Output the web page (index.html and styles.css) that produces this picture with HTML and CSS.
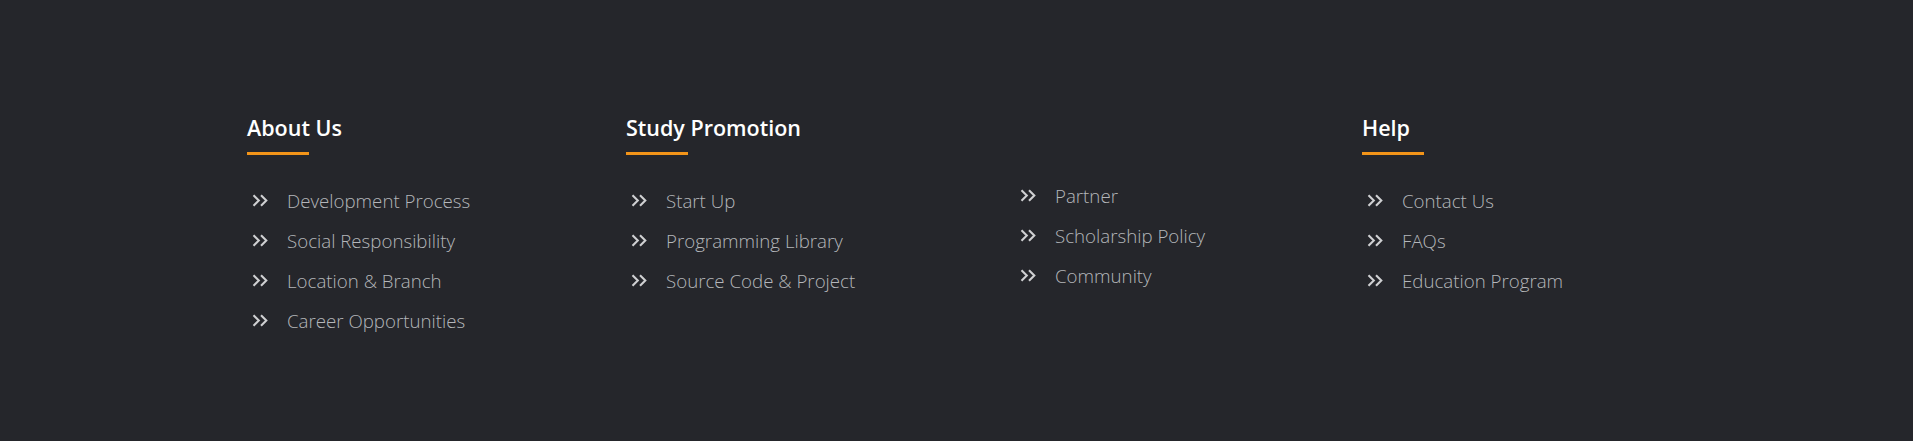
FILE: index.html
```html
<!DOCTYPE html>
<html lang="en">
<head>
<meta charset="utf-8">
<title>Footer</title>
<link rel="stylesheet" href="styles.css">
</head>
<body>
<footer class="footer">
  <div class="footer-grid">
    <div class="col">
      <h3 class="col-title">About Us</h3>
      <ul class="links">
        <li><svg class="chev" viewBox="0 0 17 13"><path d="M1.5 1.2 L6.8 6.5 L1.5 11.8 M9 1.2 L14.3 6.5 L9 11.8"/></svg><a href="#">Development Process</a></li>
        <li><svg class="chev" viewBox="0 0 17 13"><path d="M1.5 1.2 L6.8 6.5 L1.5 11.8 M9 1.2 L14.3 6.5 L9 11.8"/></svg><a href="#">Social Responsibility</a></li>
        <li><svg class="chev" viewBox="0 0 17 13"><path d="M1.5 1.2 L6.8 6.5 L1.5 11.8 M9 1.2 L14.3 6.5 L9 11.8"/></svg><a href="#">Location &amp; Branch</a></li>
        <li><svg class="chev" viewBox="0 0 17 13"><path d="M1.5 1.2 L6.8 6.5 L1.5 11.8 M9 1.2 L14.3 6.5 L9 11.8"/></svg><a href="#">Career Opportunities</a></li>
      </ul>
    </div>
    <div class="col">
      <h3 class="col-title">Study Promotion</h3>
      <ul class="links">
        <li><svg class="chev" viewBox="0 0 17 13"><path d="M1.5 1.2 L6.8 6.5 L1.5 11.8 M9 1.2 L14.3 6.5 L9 11.8"/></svg><a href="#">Start Up</a></li>
        <li><svg class="chev" viewBox="0 0 17 13"><path d="M1.5 1.2 L6.8 6.5 L1.5 11.8 M9 1.2 L14.3 6.5 L9 11.8"/></svg><a href="#">Programming Library</a></li>
        <li><svg class="chev" viewBox="0 0 17 13"><path d="M1.5 1.2 L6.8 6.5 L1.5 11.8 M9 1.2 L14.3 6.5 L9 11.8"/></svg><a href="#">Source Code &amp; Project</a></li>
      </ul>
    </div>
    <div class="col col-plain">
      <ul class="links">
        <li><svg class="chev" viewBox="0 0 17 13"><path d="M1.5 1.2 L6.8 6.5 L1.5 11.8 M9 1.2 L14.3 6.5 L9 11.8"/></svg><a href="#">Partner</a></li>
        <li><svg class="chev" viewBox="0 0 17 13"><path d="M1.5 1.2 L6.8 6.5 L1.5 11.8 M9 1.2 L14.3 6.5 L9 11.8"/></svg><a href="#">Scholarship Policy</a></li>
        <li><svg class="chev" viewBox="0 0 17 13"><path d="M1.5 1.2 L6.8 6.5 L1.5 11.8 M9 1.2 L14.3 6.5 L9 11.8"/></svg><a href="#">Community</a></li>
      </ul>
    </div>
    <div class="col">
      <h3 class="col-title">Help</h3>
      <ul class="links">
        <li><svg class="chev" viewBox="0 0 17 13"><path d="M1.5 1.2 L6.8 6.5 L1.5 11.8 M9 1.2 L14.3 6.5 L9 11.8"/></svg><a href="#">Contact Us</a></li>
        <li><svg class="chev" viewBox="0 0 17 13"><path d="M1.5 1.2 L6.8 6.5 L1.5 11.8 M9 1.2 L14.3 6.5 L9 11.8"/></svg><a href="#">FAQs</a></li>
        <li><svg class="chev" viewBox="0 0 17 13"><path d="M1.5 1.2 L6.8 6.5 L1.5 11.8 M9 1.2 L14.3 6.5 L9 11.8"/></svg><a href="#">Education Program</a></li>
      </ul>
    </div>
  </div>
</footer>
</body>
</html>
```
FILE: styles.css
```css
html, body {
  margin: 0;
  padding: 0;
  background: #25262b;
}
body {
  font-family: "Open Sans", "Noto Sans", sans-serif;
  height: 441px;
  overflow: hidden;
}
.footer {
  padding: 112px 0 0 247px;
}
.footer-grid {
  display: grid;
  grid-template-columns: 379px 389px 347px 320px;
}
.col-title {
  margin: 0;
  font-size: 21.5px;
  font-weight: 600;
  line-height: 32px;
  color: #ffffff;
}
.col-title::after {
  content: "";
  display: block;
  width: 62px;
  height: 3px;
  margin-top: 8px;
  background: #f39419;
}
.links {
  list-style: none;
  margin: 25px 0 0;
  padding: 0;
}
.col-plain .links {
  margin-top: 63px;
}
.links li {
  display: flex;
  align-items: center;
  height: 40px;
}
.chev {
  width: 17px;
  height: 13px;
  margin-left: 5px;
  margin-right: 18px;
  fill: none;
  stroke: #cfd0d2;
  stroke-width: 2.1;
}
.links a {
  color: #b4b6ba;
  text-decoration: none;
  font-size: 18.7px;
  font-weight: 300;
}
```
